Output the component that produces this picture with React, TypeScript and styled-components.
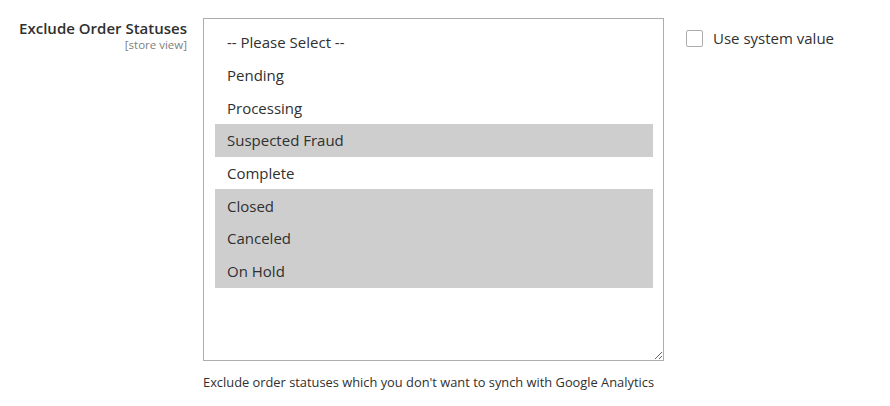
import React from "react";
import styled, { createGlobalStyle } from "styled-components";

const statuses = [
  { label: "-- Please Select --", selected: false },
  { label: "Pending", selected: false },
  { label: "Processing", selected: false },
  { label: "Suspected Fraud", selected: true },
  { label: "Complete", selected: false },
  { label: "Closed", selected: true },
  { label: "Canceled", selected: true },
  { label: "On Hold", selected: true },
];

const App = () => {
  return (
    <>
      <GlobalStyle />
      <Field>
        <Label>
          <span>Exclude Order Statuses</span>
          <Scope>[store view]</Scope>
        </Label>
        <Control>
          <MultiSelect>
            {statuses.map((s) => (
              <Option key={s.label} $selected={s.selected}>
                {s.label}
              </Option>
            ))}
          </MultiSelect>
          <Note>
            Exclude order statuses which you don't want to synch with Google
            Analytics
          </Note>
        </Control>
        <SystemValue>
          <Checkbox />
          <span>Use system value</span>
        </SystemValue>
      </Field>
    </>
  );
};

export default App;

const GlobalStyle = createGlobalStyle`
  body {
    margin: 0;
    background: #fff;
    font-family: "Open Sans", "Liberation Sans", sans-serif;
    color: #303030;
  }
`;

const Field = styled.div`
  display: grid;
  grid-template-columns: 187px 461px auto;
  column-gap: 16px;
  padding-top: 18px;
  align-items: start;
`;

const Label = styled.label`
  display: flex;
  flex-direction: column;
  align-items: flex-end;
  text-align: right;
  font-size: 15px;
  font-weight: 600;
  line-height: 20px;
  color: #303030;
`;

const Scope = styled.span`
  font-size: 11.5px;
  font-weight: 400;
  line-height: 14px;
  color: #808080;
`;

const Control = styled.div`
  display: flex;
  flex-direction: column;
`;

const MultiSelect = styled.div`
  box-sizing: border-box;
  height: 343px;
  border: 1px solid #adadad;
  padding: 7px 10px 7px 11px;
  overflow: auto;
  resize: vertical;
  background: #fff;
`;

const Option = styled.div<{ $selected: boolean }>`
  height: 32.7px;
  display: flex;
  align-items: center;
  padding: 0 11px 0 12px;
  font-size: 15px;
  color: #303030;
  background: ${(p) => (p.$selected ? "#cecece" : "transparent")};
`;

const Note = styled.div`
  margin-top: 12px;
  font-size: 12.85px;
  line-height: 18px;
  color: #303030;
`;

const SystemValue = styled.label`
  display: flex;
  align-items: center;
  gap: 10px;
  margin-left: 6px;
  padding-top: 10px;
  font-size: 15px;
  line-height: 20px;
  color: #303030;
`;

const Checkbox = styled.span`
  box-sizing: border-box;
  width: 17px;
  height: 17px;
  border: 1px solid #adadad;
  border-radius: 2px;
  background: #fff;
`;
